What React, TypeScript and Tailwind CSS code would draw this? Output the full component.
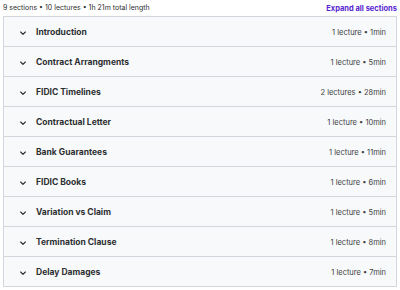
const sections = [
  { title: "Introduction", meta: "1 lecture • 1min" },
  { title: "Contract Arrangments", meta: "1 lecture • 5min" },
  { title: "FIDIC Timelines", meta: "2 lectures • 28min" },
  { title: "Contractual Letter", meta: "1 lecture • 10min" },
  { title: "Bank Guarantees", meta: "1 lecture • 11min" },
  { title: "FIDIC Books", meta: "1 lecture • 6min" },
  { title: "Variation vs Claim", meta: "1 lecture • 5min" },
  { title: "Termination Clause", meta: "1 lecture • 8min" },
  { title: "Delay Damages", meta: "1 lecture • 7min" },
];

function Chevron() {
  return (
    <svg width="8" height="8" viewBox="0 0 24 24" fill="none" stroke="#2d2f31" strokeWidth="3.5" strokeLinecap="round" strokeLinejoin="round">
      <path d="M5 9l7 7 7-7" />
    </svg>
  );
}

export default function App() {
  return (
    <div className="h-[290px] w-[400px] bg-white px-[3px] pt-[1px] font-['Inter',sans-serif] text-[#2d2f31]">
      <div className="flex h-[15px] items-center justify-between">
        <span className="text-[7px] text-[#2d2f31]">9 sections • 10 lectures • 1h 21m total length</span>
        <span className="text-[7.5px] font-bold text-[#5624d0]">Expand all sections</span>
      </div>
      <div className="w-[394px] border border-[#d1d7dc]">
        {sections.map((s, i) => (
          <div
            key={s.title}
            className={
              "flex items-center bg-[#f7f9fa] pl-[15px] pr-[10px] pt-[2px] " +
              (i < sections.length - 1 ? "h-[30px] border-b border-[#d1d7dc]" : "h-[29px]")
            }
          >
            <Chevron />
            <span className="ml-[9px] text-[8.5px] font-bold">{s.title}</span>
            <span className="ml-auto text-[7.5px] text-[#3e4143]">{s.meta}</span>
          </div>
        ))}
      </div>
    </div>
  );
}
